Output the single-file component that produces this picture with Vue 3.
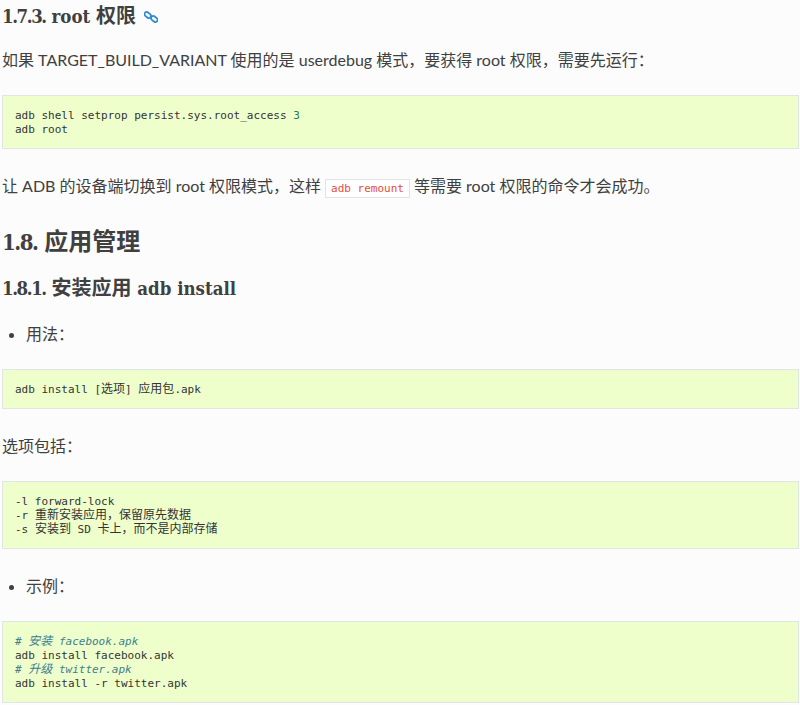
<script setup>
const samples = null
</script>

<template>
  <main class="doc">
    <h3 class="first"><span class="n">1.7.3.</span> <span class="en">root</span> <span class="zh">权限</span> <a class="link" aria-label="link"><svg width="14" height="14" viewBox="0 0 14 14" fill="none" stroke="#2e8ccb" stroke-width="1.8"><rect x="0.2" y="2.8" width="7" height="4.4" rx="2.2" transform="rotate(40 3.7 5)"/><rect x="6.8" y="6.8" width="7" height="4.4" rx="2.2" transform="rotate(40 10.3 9)"/></svg></a></h3>
    <p>如果 TARGET_BUILD_VARIANT 使用的是 userdebug 模式，要获得 root 权限，需要先运行：</p>
    <pre>adb shell setprop persist.sys.root_access <span class="num">3</span>
adb root</pre>
    <p>让 ADB 的设备端切换到 root 权限模式，这样 <code>adb remount</code> 等需要 root 权限的命令才会成功。</p>
    <h2><span class="n">1.8.</span> <span class="zh">应用管理</span></h2>
    <h3><span class="n">1.8.1.</span> <span class="zh">安装应用</span> <span class="en">adb install</span></h3>
    <ul><li>用法：</li></ul>
    <pre>adb install [<span class="zh">选项</span>] <span class="zh">应用包</span>.apk</pre>
    <p>选项包括：</p>
    <pre>-l forward-lock
-r <span class="zh">重新安装应用，保留原先数据</span>
-s <span class="zh">安装到</span> SD <span class="zh">卡上，而不是内部存储</span></pre>
    <ul><li>示例：</li></ul>
    <pre><span class="c"># <span class="zh">安装</span> facebook.apk</span>
adb install facebook.apk
<span class="c"># <span class="zh">升级</span> twitter.apk</span>
adb install -r twitter.apk</pre>
  </main>
</template>

<style>
html, body { margin: 0; background: #fcfcfc; overflow: hidden; }
</style>
<style scoped>
.doc {
  height: 705px;
  width: 800px;
  overflow: hidden;
  padding: 0 1px 0 2px;
  background: #fcfcfc;
  color: #404040;
  font-family: Lato, "Noto Sans CJK SC", sans-serif;
  font-size: 16px;
  line-height: 24px;
  box-sizing: border-box;
}
h2, h3 {
  font-family: "DejaVu Serif", "Noto Sans CJK SC", serif;
  font-weight: 700;
  font-stretch: condensed;
}
h2 { font-size: 22px; line-height: 30px; margin: 0 0 19px; padding-top: 3px; }
h3 { font-size: 18.5px; line-height: 24px; margin: 0 0 20px; }
h2 .zh { font-size: 24px; }
h3 .zh { font-size: 20px; }
h3 .n { letter-spacing: -1.4px; }
h2 .n { letter-spacing: -1.5px; }
.first { margin: 4px 0 17px; }
.link { margin-left: 2px; vertical-align: -1px; }
p, li { line-height: 24px; padding-top: 1px; }
p { margin: 0 0 23px; }
pre {
  margin: 0 0 24px;
  padding: 13px 12px 11px;
  background: #eeffcc;
  border: 1px solid #e1e4e5;
  font-family: "DejaVu Sans Mono", "Noto Sans CJK SC", monospace;
  font-size: 11px;
  line-height: 14px;
  color: #333;
}
pre .zh { font-size: 12px; line-height: 1; }
.num { color: #208050; }
.c { color: #408090; font-style: italic; }
code {
  padding: 2px 5px;
  background: #fff;
  border: 1px solid #e1e4e5;
  color: #e74c3c;
  font-family: "DejaVu Sans Mono", monospace;
  font-size: 11px;
}
ul { margin: 0 0 23px; padding-left: 24px; list-style: disc; }
</style>
